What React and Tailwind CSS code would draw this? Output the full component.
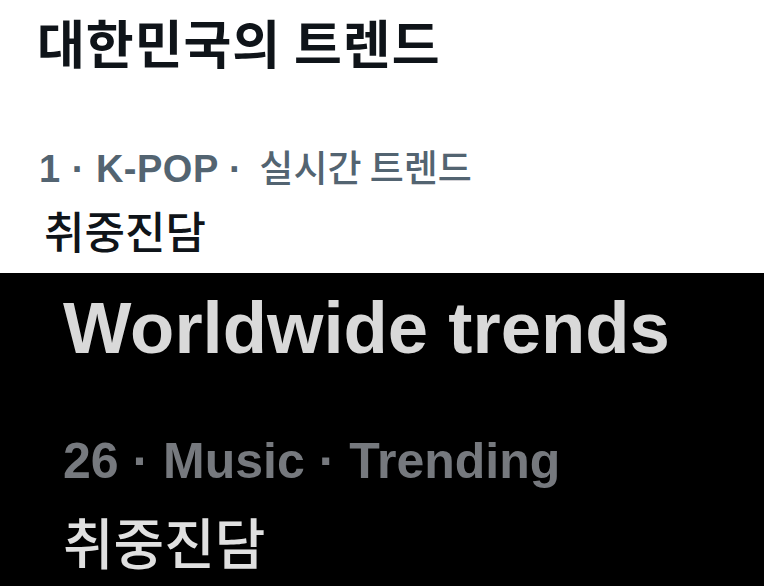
export default function App() {
  const kr = { fontFamily: '"Noto Sans CJK KR", "Noto Sans", sans-serif' };
  return (
    <div className="w-[764px] h-[586px] flex flex-col overflow-hidden">
      <div className="h-[273px] bg-white pl-[39px] flex flex-col">
        <div
          className="mt-[16px] -ml-[2px] text-[52px] leading-[52px] font-bold tracking-[1px] text-[#0f1419] whitespace-nowrap"
          style={kr}
        >
          대한민국의 트렌드
        </div>
        <div className="mt-[79px] text-[38px] leading-[38px] text-[#536471] whitespace-nowrap font-['Liberation_Sans','Noto_Sans_CJK_KR',sans-serif]">
          <span className="font-bold tracking-[0.5px]">1 · K-POP · </span>
          <span className="ml-[6px] text-[37px] font-medium" style={kr}>
            실시간 트렌드
          </span>
        </div>
        <div
          className="mt-[20px] ml-[5px] text-[44px] leading-[44px] font-medium text-[#0f1419] whitespace-nowrap"
          style={kr}
        >
          취중진담
        </div>
      </div>
      <div className="flex-1 bg-black pl-[63px] flex flex-col">
        <div className="mt-[19px] text-[72.5px] leading-[72.5px] font-bold text-[#d9d9d9] whitespace-nowrap font-['Liberation_Sans',sans-serif]">
          Worldwide trends
        </div>
        <div className="mt-[71px] text-[50px] leading-[50px] font-bold text-[#76797e] whitespace-nowrap font-['Liberation_Sans',sans-serif]">
          26 · Music · Trending
        </div>
        <div
          className="mt-[27px] text-[55px] leading-[55px] font-medium text-[#e0e0e0] whitespace-nowrap"
          style={kr}
        >
          취중진담
        </div>
      </div>
    </div>
  );
}
